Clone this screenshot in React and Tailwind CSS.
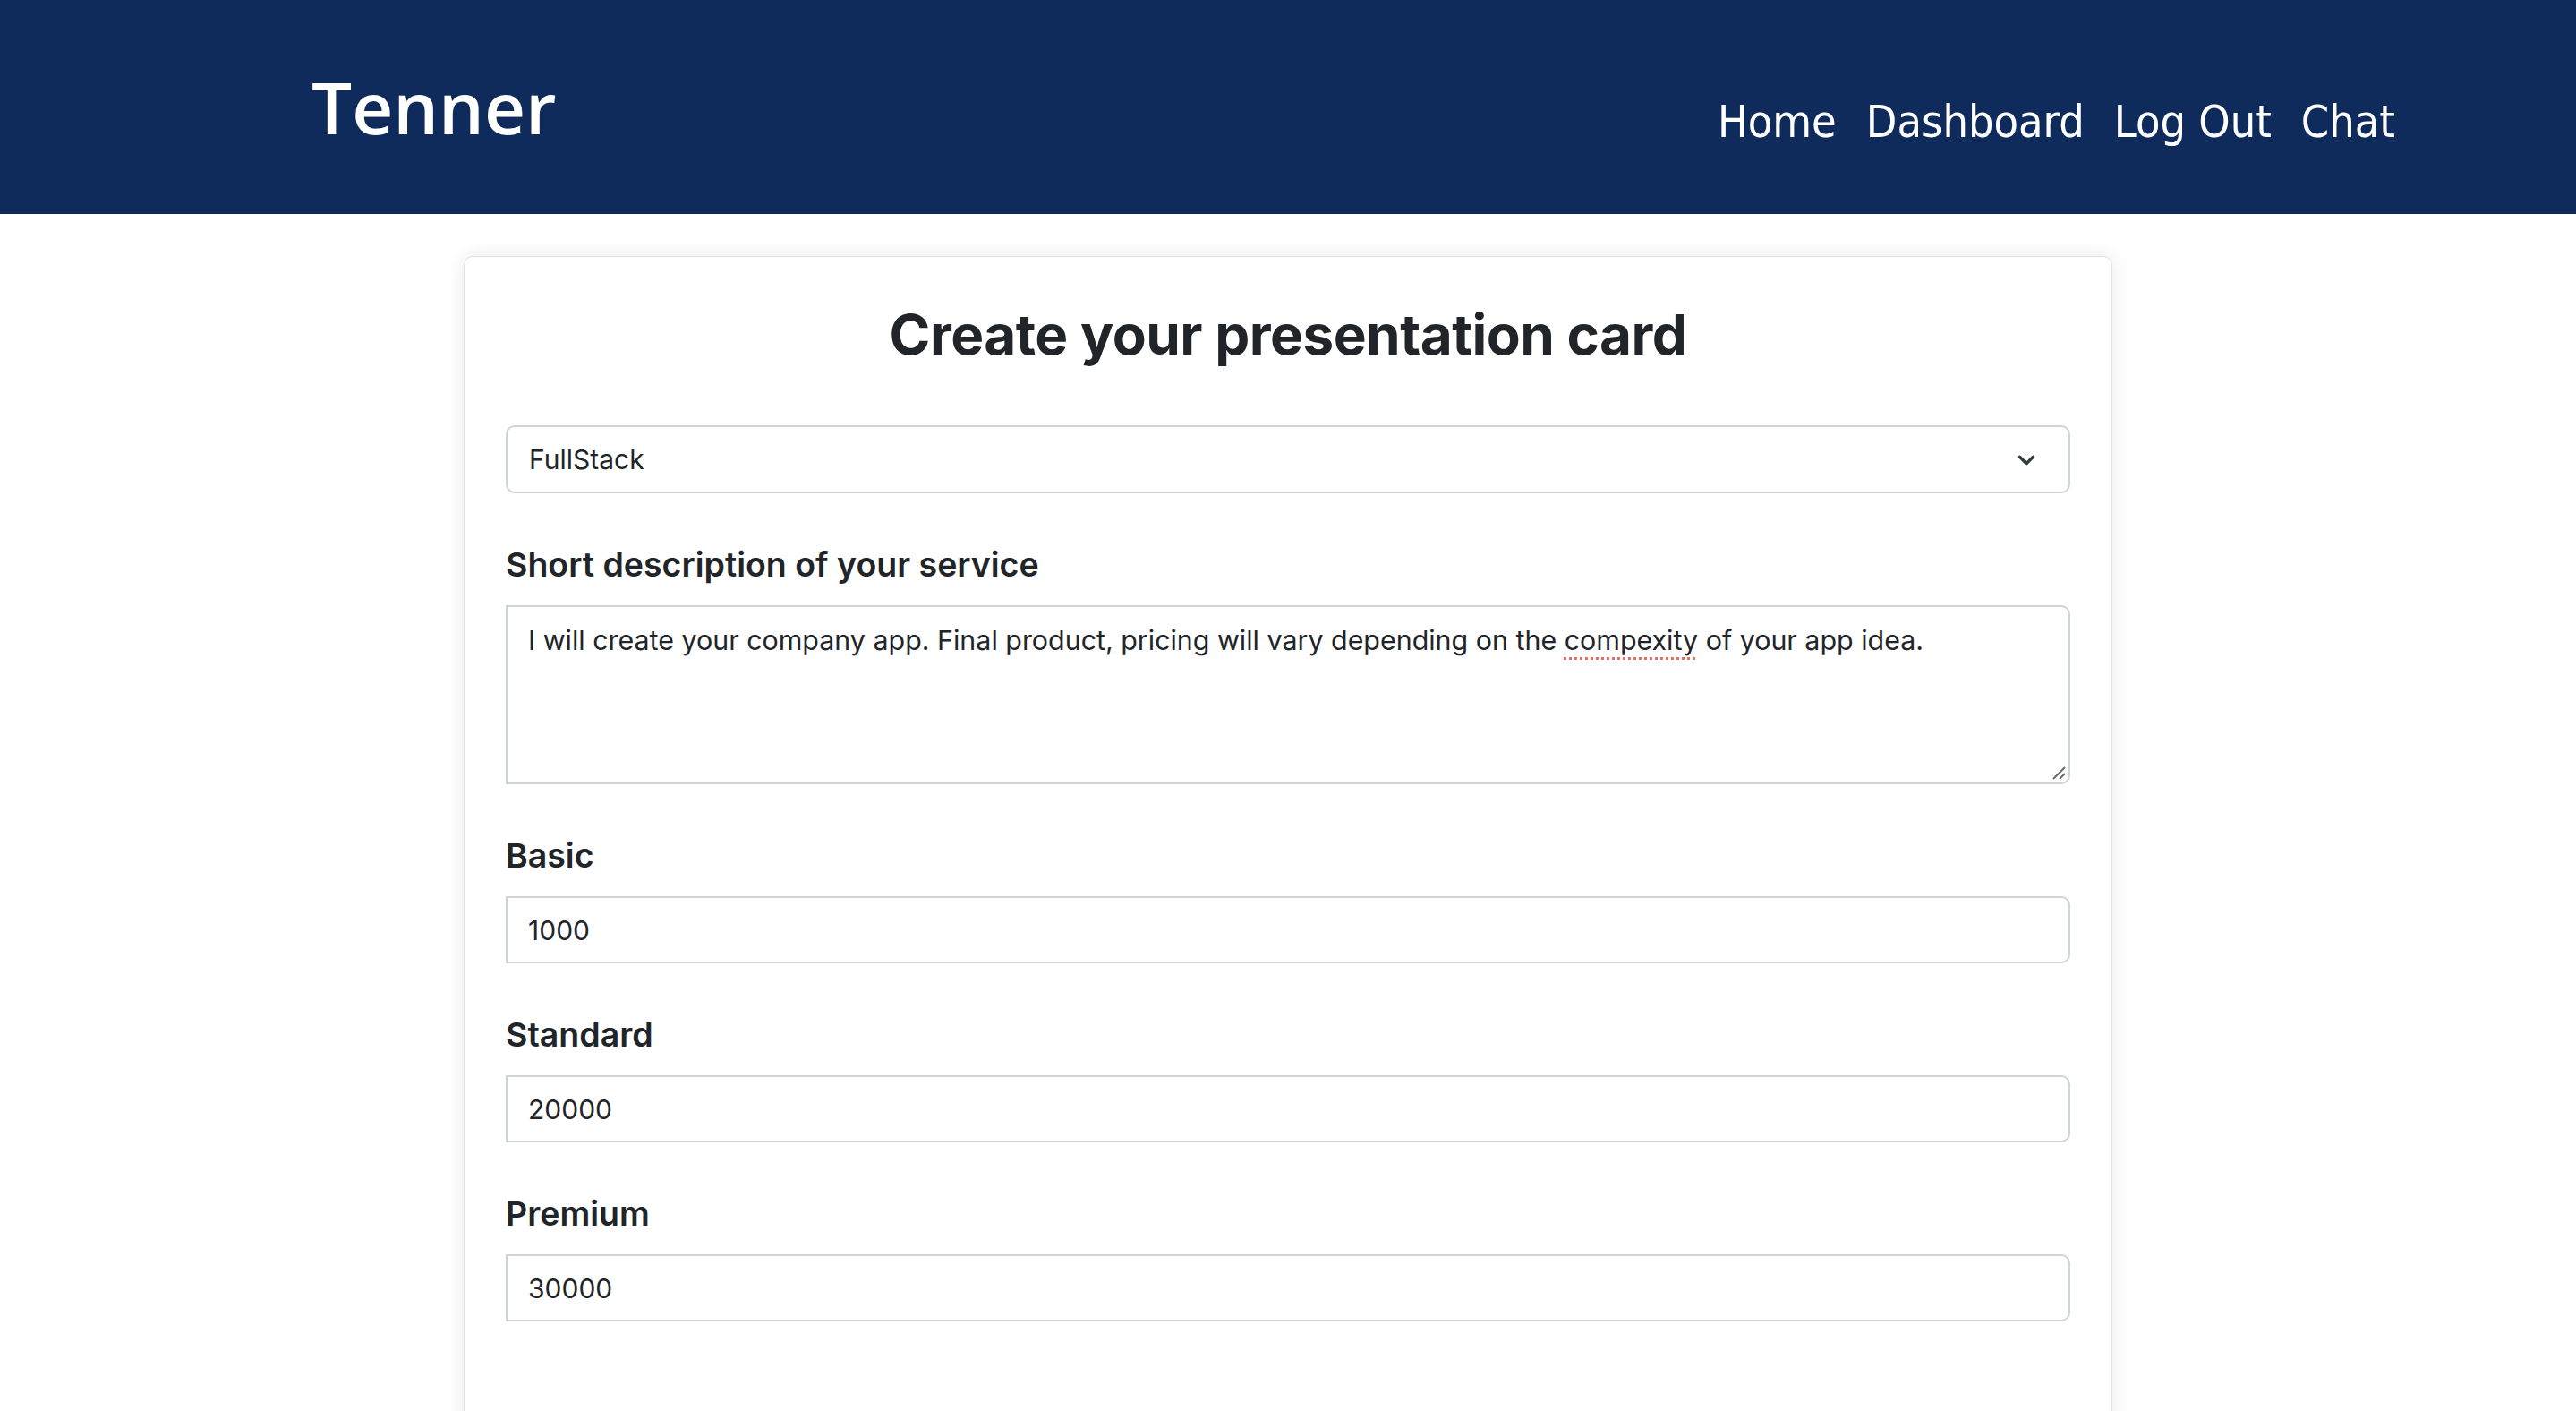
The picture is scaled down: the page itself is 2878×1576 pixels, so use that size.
import { useState } from 'react';
import { ChevronDown } from 'lucide-react';

const navLinks = ['Home', 'Dashboard', 'Log Out', 'Chat'];

const prices = [
    { label: 'Basic', value: '1000' },
    { label: 'Standard', value: '20000' },
    { label: 'Premium', value: '30000' },
];

export default function App() {
    const [category, setCategory] = useState('FullStack');

    return (
        <div className="min-h-screen bg-white font-['Inter','Liberation_Sans',sans-serif] text-[#212529]">
            <header className="h-[239px] bg-[#0f2b5b] flex items-center justify-between pl-[348px] pr-[202px]">
                <a href="#" className="font-['Open_Sans',sans-serif] text-[80px] font-semibold leading-none text-white pb-[2px]">
                    Tenner
                </a>
                <nav className="flex gap-[33px] pt-[32px] font-['DejaVu_Sans_Condensed','DejaVu_Sans',sans-serif] font-stretch-condensed text-[50px] leading-none text-white">
                    {navLinks.map(link => (
                        <a key={link} href="#" className="hover:underline">
                            {link}
                        </a>
                    ))}
                </nav>
            </header>

            <div className="w-[1842px] mx-auto mt-[47px] bg-white border border-[#dee2e6] rounded-[10px] shadow-[0_0_22px_rgba(0,0,0,0.09)] px-[46px] pt-[50px] pb-[160px]">
                <h2 className="text-[62px] leading-[1.2] font-bold text-center tracking-[-0.5px]">
                    Create your presentation card
                </h2>

                <div className="relative mt-[64px]">
                    <select
                        value={category}
                        onChange={e => setCategory(e.target.value)}
                        className="appearance-none w-full h-[76px] pl-[24px] pr-[80px] text-[30px] bg-white border-2 border-[#ced4da] rounded-[10px] outline-none"
                    >
                        <option>FullStack</option>
                        <option>Frontend</option>
                        <option>Backend</option>
                        <option>Mobile</option>
                    </select>
                    <ChevronDown className="absolute right-[34px] top-[24px] w-[30px] h-[30px] text-[#343a40] pointer-events-none" strokeWidth={2.6} />
                </div>

                <label className="block mt-[57px] mb-[23px] text-[37.5px] leading-[1.2] font-semibold">
                    Short description of your service
                </label>
                <div className="relative h-[200px] border-2 border-[#ced4da] rounded-r-[10px] pl-[23px] pt-[15px] text-[30.4px] leading-[1.5]" role="textbox">
                    I will create your company app. Final product, pricing will vary depending on the{' '}
                    <span className="underline decoration-dotted decoration-[#ee6a5f] decoration-[3px] underline-offset-[8px]">compexity</span>{' '}
                    of your app idea.
                    <svg className="absolute right-[3px] bottom-[3px] w-[16px] h-[16px]" viewBox="0 0 16 16">
                        <path d="M2 15 L15 2 M9 15 L15 9" stroke="#6b6b6b" strokeWidth="2" />
                    </svg>
                </div>

                {prices.map(price => (
                    <div key={price.label}>
                        <label className="block mt-[57px] mb-[23px] text-[37.5px] leading-[1.2] font-semibold">
                            {price.label}
                        </label>
                        <input
                            type="text"
                            defaultValue={price.value}
                            className="w-full h-[75px] pl-[23px] text-[30px] border-2 border-[#ced4da] rounded-r-[10px] outline-none"
                        />
                    </div>
                ))}
            </div>
        </div>
    );
}
